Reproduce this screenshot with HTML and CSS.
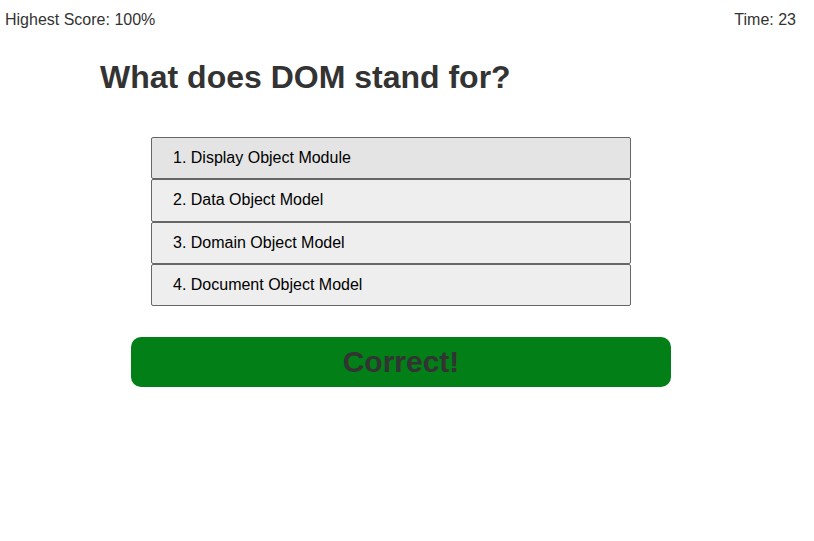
FILE: index.html
```html
<!DOCTYPE html>
<html>
<head>
<meta charset="utf-8">
<link rel="stylesheet" href="styles.css">
</head>
<body>
<header class="top">
  <span class="score">Highest Score: 100%</span>
  <span class="time">Time: 23</span>
</header>
<main class="quiz">
  <h1 class="question">What does DOM stand for?</h1>
  <ul class="options">
    <li class="option hover">1. Display Object Module</li>
    <li class="option">2. Data Object Model</li>
    <li class="option">3. Domain Object Model</li>
    <li class="option">4. Document Object Model</li>
  </ul>
  <div class="result">Correct!</div>
</main>
</body>
</html>
```
FILE: styles.css
```css
* { box-sizing: border-box; }
html, body { margin: 0; padding: 0; background: #fff; }
body {
  font-family: "Liberation Sans", Arial, Helvetica, sans-serif;
  color: #333;
  width: 814px;
}
.top {
  display: flex;
  justify-content: space-between;
  padding: 10px 18px 0 5px;
  font-size: 16px;
  line-height: 19px;
}
.quiz {
  padding-left: 100px;
}
.question {
  margin: 30px 0 0 0;
  font-size: 32px;
  line-height: 37px;
  font-weight: bold;
  color: #333;
}
.options {
  list-style: none;
  margin: 41px 0 0 51px;
  padding: 0;
  width: 480px;
}
.option {
  height: 42.25px;
  border: 1px solid #666;
  border-radius: 2px;
  background: #eee;
  color: #000;
  font-size: 16px;
  padding-left: 21px;
  display: flex;
  align-items: center;
}
.option.hover { background: #e4e4e4; }
.result {
  margin: 31px 0 0 31px;
  width: 540px;
  height: 50px;
  border-radius: 10px;
  background: #027f17;
  color: #333;
  font-weight: bold;
  font-size: 30px;
  display: flex;
  align-items: center;
  justify-content: center;
}
```
